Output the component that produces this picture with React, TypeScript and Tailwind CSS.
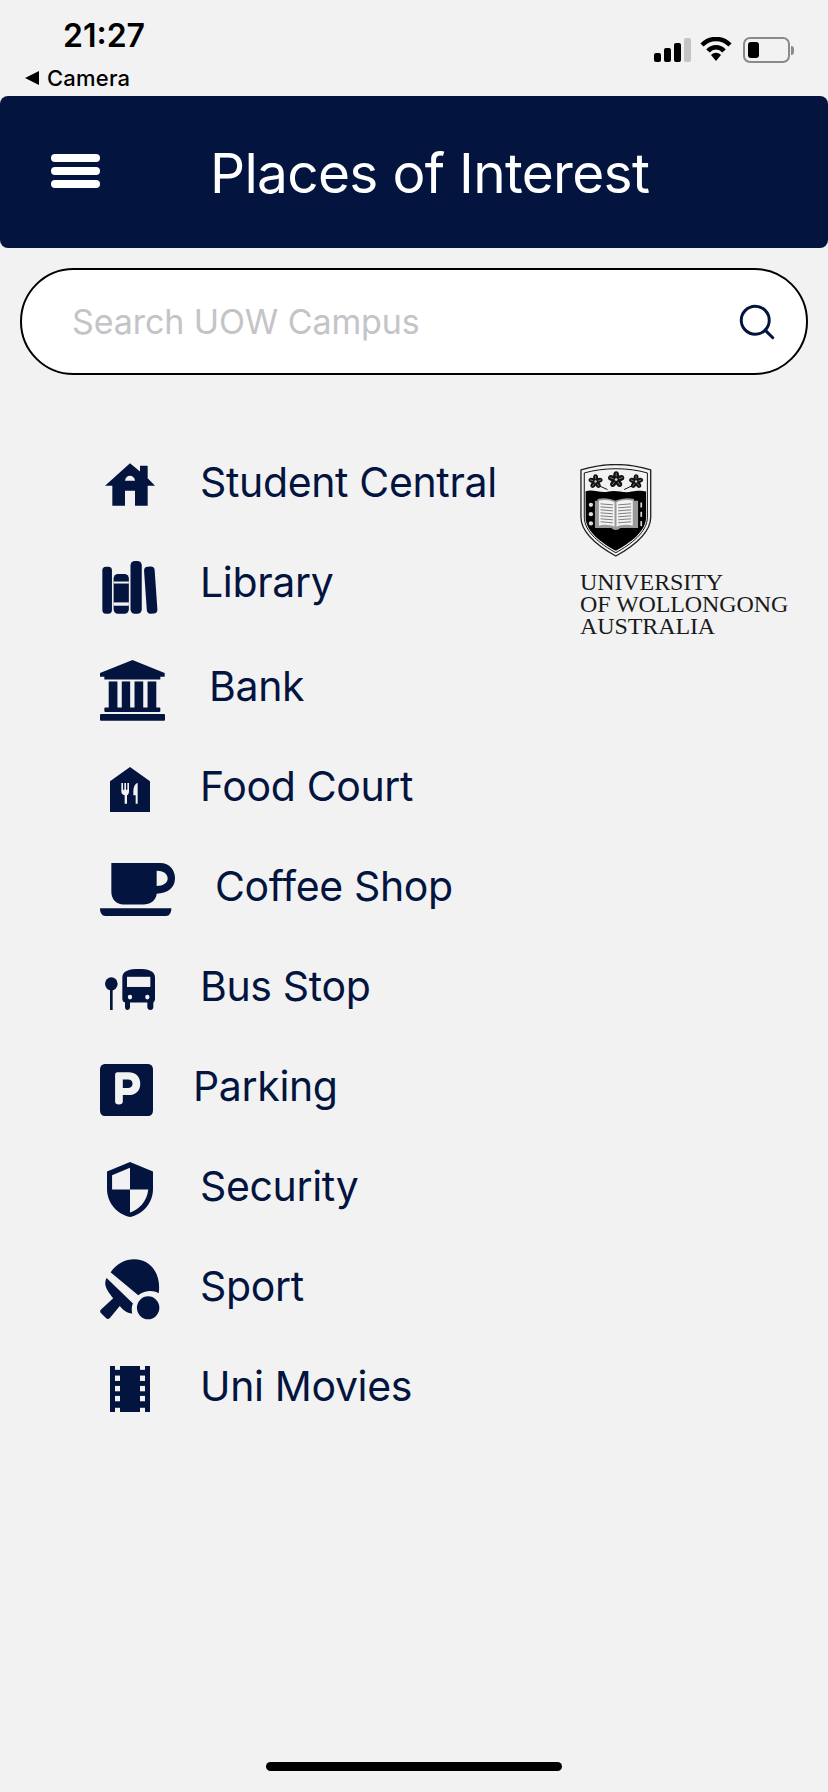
import { Search } from 'lucide-react';
import type { ReactNode } from 'react';

const NAVY = '#03143e';
const BG = '#f2f2f3';

function HouseIcon() {
  return (
    <svg viewBox="75 67 150 128" width="50" height="43">
      <path fill={NAVY} d="M150 67 L180 92 V75 H203 V112 L225 135 H203 V195 H165 V150 H135 V195 H97 V135 H75 Z" />
      <path fill={BG} d="M135 120 C137 100 163 100 165 120 Z" />
    </svg>
  );
}

function BooksIcon() {
  return (
    <svg viewBox="65 363 170 160" width="57" height="53">
      <g fill={NAVY}>
        <rect x="65" y="380" width="29" height="142" rx="11" />
        <rect x="99" y="402" width="46" height="120" rx="13" />
        <rect x="150" y="363" width="34" height="159" rx="13" />
        <rect x="195" y="380" width="32" height="142" rx="12" transform="rotate(-4 212 450)" />
      </g>
      <rect x="99" y="425" width="46" height="6" fill={BG} />
      <rect x="99" y="488" width="46" height="10" fill={BG} />
    </svg>
  );
}

function BankIcon() {
  return (
    <svg viewBox="60 658 194 182" width="65" height="61">
      <g fill={NAVY}>
        <path d="M157 658 L253 697 V708 H240 V716 H73 V708 H60 V697 Z" />
        <rect x="86" y="722" width="26" height="80" />
        <rect x="125" y="722" width="25" height="80" />
        <rect x="163" y="722" width="26" height="80" />
        <rect x="202" y="722" width="26" height="80" />
        <rect x="73" y="800" width="167" height="13" rx="3" />
        <rect x="60" y="819" width="194" height="20" rx="3" />
      </g>
    </svg>
  );
}

function FoodIcon() {
  return (
    <svg viewBox="90 980 120 135" width="40" height="45">
      <path fill={NAVY} d="M150 980 L210 1023 V1115 H90 V1023 Z" />
      <path fill={BG} d="M124 1028 H129 V1048 H133 V1028 H138 V1048 H142 V1028 H147 V1054 C147 1060 143 1064 141 1065 V1090 H134 V1065 C128 1062 124 1060 124 1054 Z" />
      <path fill={BG} d="M160 1055 C160 1040 165 1030 173 1028 V1090 H167 V1065 H160 Z" />
    </svg>
  );
}

function CoffeeIcon() {
  return (
    <svg viewBox="60 60 225 138" width="75" height="53" preserveAspectRatio="none">
      <path
        fill={NAVY}
        fillRule="evenodd"
        d="M94 60 H240 C270 60 285 80 285 100 C285 125 262 140 230 140 C228 158 210 168 190 168 H130 C110 168 94 155 94 135 Z M230 80 V120 C250 120 263 112 263 100 C263 88 250 80 230 80 Z"
      />
      <path fill={NAVY} d="M60 178 H274 C274 190 268 198 258 198 H76 C66 198 60 190 60 178 Z" />
    </svg>
  );
}

function BusIcon() {
  return (
    <svg viewBox="75 338 150 105" width="50" height="41" preserveAspectRatio="none">
      <g fill={NAVY}>
        <ellipse cx="94" cy="376" rx="19" ry="17" />
        <rect x="90" y="385" width="8" height="58" />
        <path d="M127 360 C127 342 150 338 176 338 C202 338 225 342 225 360 V415 C225 420 222 423 220 424 V436 C220 440 216 443 212 443 C206 443 202 440 202 436 V424 H150 V436 C150 440 146 443 142 443 C138 443 135 440 135 436 V424 C130 422 127 420 127 415 Z" />
      </g>
      <rect x="141" y="358" width="70" height="26" fill={BG} />
      <ellipse cx="150" cy="410" rx="6.5" ry="6" fill={BG} />
      <ellipse cx="202" cy="410" rx="6.5" ry="6" fill={BG} />
    </svg>
  );
}

function ParkingIcon() {
  return (
    <svg viewBox="60 583 158 137" width="53" height="52" preserveAspectRatio="none">
      <rect x="60" y="583" width="158" height="137" rx="14" fill={NAVY} />
      <path
        fill={BG}
        fillRule="evenodd"
        d="M105 612 Q105 605 112 605 H145 C170 605 180 620 180 635 C180 655 165 665 145 665 H128 V682 Q128 690 116 690 Q105 690 105 682 Z M128 624 V646 H143 C152 646 157 642 157 635 C157 628 152 624 143 624 Z"
      />
    </svg>
  );
}

function ShieldIcon() {
  return (
    <svg viewBox="82 840 136 144" width="46" height="55" preserveAspectRatio="none">
      <path fill={NAVY} d="M150 840 L218 865 V910 C218 950 185 978 150 984 C115 978 82 950 82 910 V865 Z" />
      <path fill={BG} d="M150 855 L97 875 V912 H150 Z" />
      <path fill={BG} d="M150 912 H204 C200 945 175 965 150 972 Z" />
    </svg>
  );
}

function PingPongIcon() {
  return (
    <svg viewBox="60 1095 182 160" width="60" height="61" preserveAspectRatio="none">
      <g fill={NAVY}>
        <path d="M92 1130 C115 1102 150 1090 185 1098 C225 1108 245 1145 238 1185 C222 1177 198 1176 176 1190 Z" />
        <path d="M80 1145 L160 1212 C155 1220 156 1232 158 1238 C140 1236 130 1228 120 1218 L90 1250 Q84 1255 78 1250 L62 1236 Q58 1231 64 1227 L100 1198 C85 1180 68 1165 80 1145 Z" />
        <ellipse cx="206" cy="1223" rx="34" ry="30" />
      </g>
    </svg>
  );
}

function FilmIcon() {
  const holes = [1400, 1427, 1453];
  return (
    <svg viewBox="90 1375 120 120" width="40" height="46" preserveAspectRatio="none">
      <rect x="90" y="1375" width="120" height="120" fill={NAVY} />
      {[105, 180].map((x) => (
        <g key={x} fill={BG}>
          <rect x={x} y="1375" width="15" height="10" />
          <rect x={x} y="1484" width="15" height="11" />
          {holes.map((y) => (
            <rect key={y} x={x} y={y} width="15" height="14" />
          ))}
        </g>
      ))}
    </svg>
  );
}

function Flower({ x, y, s }: { x: number; y: number; s: number }) {
  return (
    <g transform={`translate(${x} ${y}) scale(${s})`}>
      {[0, 72, 144, 216, 288].map((a) => (
        <g key={a} transform={`rotate(${a})`}>
          <ellipse cx="0" cy="-9" rx="6" ry="8.5" fill="#111" />
          <path d="M0 -14 V-6" stroke="#bbb" strokeWidth="1.2" />
        </g>
      ))}
      <circle r="3" fill="#ccc" />
    </g>
  );
}

function UowCrest() {
  return (
    <svg viewBox="60 45 215 280" width="72" height="93">
      <path fill="none" stroke="#222" strokeWidth="4" d="M62 63 C130 42 205 42 272 63 V205 C272 255 215 295 167 322 C119 295 62 255 62 205 Z" />
      <path fill={BG} stroke="#111" strokeWidth="3" d="M72 72 C130 55 205 55 262 72 V205 C262 250 212 287 167 312 C122 287 72 250 72 205 Z" />
      <path fill="#000" d="M76 127 C100 120 120 134 145 128 C170 122 190 134 215 128 C235 124 248 126 258 128 V205 C258 248 210 282 167 306 C124 282 76 248 76 205 Z" />
      <path fill="none" stroke="#111" strokeWidth="3" d="M115 110 L142 122 M217 110 L192 122" />
      <Flower x={106} y={98} s={1.25} />
      <Flower x={168} y={92} s={1.45} />
      <Flower x={228} y={98} s={1.25} />
      <path fill="#9a9a9a" d="M104 156 H112 V150 C130 146 150 148 166 156 C182 148 204 146 222 150 V156 H234 V238 H180 C176 246 158 246 154 238 H104 Z" />
      <path fill="#f2f2f2" d="M116 156 C130 151 150 153 163 160 V234 C150 228 130 226 116 231 Z" />
      <path fill="#f2f2f2" d="M169 160 C182 153 204 151 218 156 V231 C204 226 182 228 169 234 Z" />
      <g stroke="#666" strokeWidth="2.5">
        {[165, 174, 183, 192, 201, 210, 219].map((y) => (
          <g key={y}>
            <path d={`M121 ${y} L158 ${y + 3}`} />
            <path d={`M174 ${y + 3} L213 ${y}`} />
          </g>
        ))}
      </g>
      {[170, 198, 226].map((y) => (
        <g key={y}>
          <circle cx="92" cy={y - 2} r="6.5" fill="#ddd" />
          <rect x="241" y={y - 9} width="5" height="15" fill="#ddd" />
        </g>
      ))}
    </svg>
  );
}

const places: { icon: ReactNode; label: string; iconBox: string; row: string }[] = [
  { icon: <HouseIcon />, label: 'Student Central', iconBox: 'w-[100px] pl-[5px] pt-[3px]', row: 'h-[99px]' },
  { icon: <BooksIcon />, label: 'Library', iconBox: 'w-[100px] pl-[2px] pt-[10px]', row: 'h-[100px]' },
  { icon: <BankIcon />, label: 'Bank', iconBox: 'w-[109px] pt-[8px]', row: 'h-[104px] pt-[4px]' },
  { icon: <FoodIcon />, label: 'Food Court', iconBox: 'w-[100px] pl-[10px] pt-[6px]', row: 'h-[100px]' },
  { icon: <CoffeeIcon />, label: 'Coffee Shop', iconBox: 'w-[115px] pt-[6px]', row: 'h-[100px]' },
  { icon: <BusIcon />, label: 'Bus Stop', iconBox: 'w-[100px] pl-[5px] pt-[6px]', row: 'h-[100px]' },
  { icon: <ParkingIcon />, label: 'Parking', iconBox: 'w-[93px] pt-[8px]', row: 'h-[100px]' },
  { icon: <ShieldIcon />, label: 'Security', iconBox: 'w-[100px] pl-[7px] pt-[6px]', row: 'h-[100px]' },
  { icon: <PingPongIcon />, label: 'Sport', iconBox: 'w-[100px] pt-[7px]', row: 'h-[100px]' },
  { icon: <FilmIcon />, label: 'Uni Movies', iconBox: 'w-[100px] pl-[10px] pt-[6px]', row: 'h-[100px]' },
];

export default function App() {
  return (
    <div className="w-[828px] h-[1792px] flex flex-col bg-[#f2f2f3] font-['Inter',sans-serif] overflow-hidden">
      {/* Status bar */}
      <div className="h-[96px] flex justify-between shrink-0">
        <div className="flex flex-col pt-[18px]">
          <span className="ml-[63px] text-[32px] leading-[36px] font-semibold text-black">21:27</span>
          <div className="ml-[25px] mt-[12px] flex items-center gap-[8px]">
            <span className="w-0 h-0 border-y-[7px] border-y-transparent border-r-[14px] border-r-black" />
            <span className="text-[22px] leading-[24px] font-medium text-black tracking-[0.2px]">Camera</span>
          </div>
        </div>
        <div className="flex items-start pt-[37px] pr-[34px]">
          <svg viewBox="0 0 37 24" width="37" height="24" className="mt-[1px] mr-[9px]">
            <rect x="0" y="15" width="7" height="9" rx="2" fill="#000" />
            <rect x="10" y="10" width="7" height="14" rx="2" fill="#000" />
            <rect x="20" y="5" width="7" height="19" rx="2" fill="#000" />
            <rect x="30" y="0" width="7" height="24" rx="2" fill="#c4c4c4" />
          </svg>
          <svg viewBox="0 0 32 24" width="32" height="24" className="mr-[11px]">
            <path d="M2 8 C10 0 22 0 30 8" fill="none" stroke="#000" strokeWidth="4.5" />
            <path d="M8 14 C12 9 20 9 24 14" fill="none" stroke="#000" strokeWidth="4.5" />
            <path d="M11 18 C14 15 18 15 21 18 L16 24 Z" fill="#000" />
          </svg>
          <div className="flex items-center">
            <div className="w-[47px] h-[26px] rounded-[7px] border-2 border-[#8a8a8a] p-[3px]">
              <div className="w-[11px] h-full rounded-[3px] bg-black" />
            </div>
            <div className="w-[3px] h-[9px] ml-[1px] rounded-r-sm bg-[#8a8a8a]" />
          </div>
        </div>
      </div>

      {/* Header */}
      <header className="h-[152px] shrink-0 flex items-center rounded-lg bg-[#03143e]">
        <div className="ml-[51px] w-[49px] flex flex-col gap-[5px] mb-[2px]">
          <span className="h-[8px] rounded-sm bg-white" />
          <span className="h-[8px] rounded-sm bg-white" />
          <span className="h-[8px] rounded-sm bg-white" />
        </div>
        <h1 className="ml-[110px] mt-[3px] text-[55px] leading-none font-normal tracking-[-0.7px] text-white">Places of Interest</h1>
      </header>

      {/* Search */}
      <div className="mx-[20px] mt-[20px] h-[107px] shrink-0 flex items-center justify-between rounded-[54px] border-2 border-black bg-white pl-[50px] pr-[28px]">
        <span className="text-[34px] tracking-[-0.1px] text-[#c4c4c8]">Search UOW Campus</span>
        <Search size={42} strokeWidth={1.7} color={NAVY} />
      </div>

      {/* Places + logo */}
      <div className="flex mt-[58px]">
        <ul className="ml-[100px] w-[460px] flex flex-col">
          {places.map((p) => (
            <li key={p.label} className={`flex items-center ${p.row}`}>
              <div className={`flex items-center ${p.iconBox}`}>{p.icon}</div>
              <span className="text-[41px] leading-none tracking-[-0.35px] text-[#03143e]">{p.label}</span>
            </li>
          ))}
        </ul>
        <div className="ml-[20px] mt-[31px]">
          <UowCrest />
          <div className="mt-[14px] font-['Liberation_Serif',serif] text-[24px] leading-[22px] text-[#1a1a1a] tracking-[-0.1px]">
            <div>UNIVERSITY</div>
            <div className="whitespace-nowrap">OF WOLLONGONG</div>
            <div>AUSTRALIA</div>
          </div>
        </div>
      </div>

      {/* Home indicator */}
      <div className="mt-auto mb-[21px] mx-auto w-[296px] h-[9px] rounded-full bg-black" />
    </div>
  );
}
